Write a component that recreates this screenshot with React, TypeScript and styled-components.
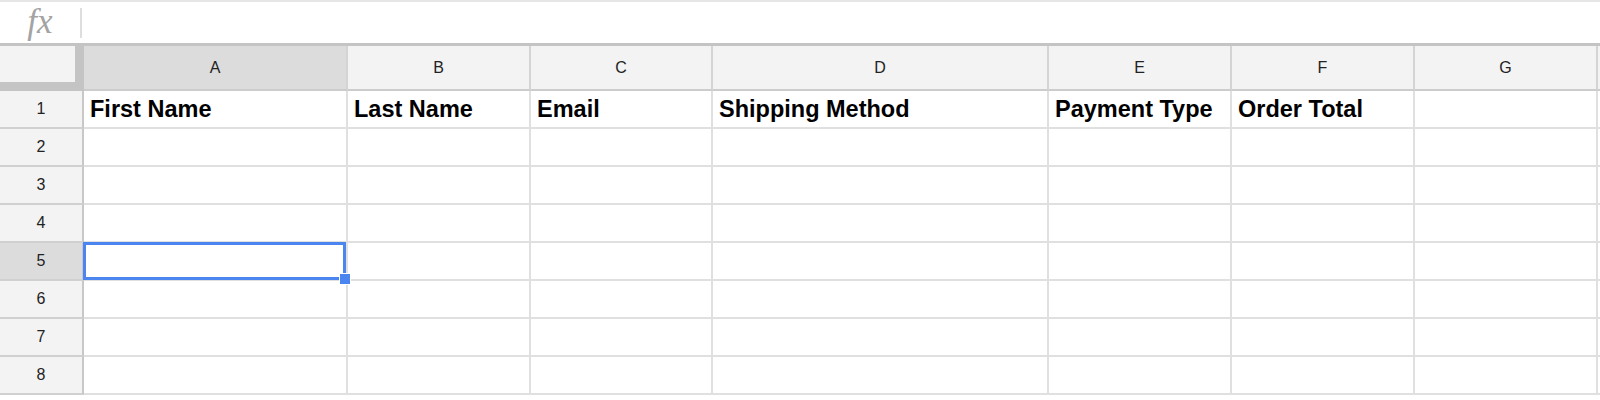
import { createGlobalStyle, styled } from 'styled-components';

const columns = [
  { key: 'A', width: 264 },
  { key: 'B', width: 183 },
  { key: 'C', width: 182 },
  { key: 'D', width: 336 },
  { key: 'E', width: 183 },
  { key: 'F', width: 183 },
  { key: 'G', width: 183 },
];

const headings = ['First Name', 'Last Name', 'Email', 'Shipping Method', 'Payment Type', 'Order Total', ''];

const rowCount = 8;
const activeCol = 0;
const activeRow = 5;

export default function App() {
  return (
    <>
      <GlobalStyle />
      <Page>
        <FormulaBar>
          <FxLabel>fx</FxLabel>
          <FormulaDivider />
          <FormulaInput />
        </FormulaBar>
        <Grid>
          <Corner />
          {columns.map((col, i) => (
            <ColumnHeader key={col.key} $active={i === activeCol}>
              {col.key}
            </ColumnHeader>
          ))}
          <ColumnHeader $active={false} />

          {Array.from({ length: rowCount }, (_, r) => {
            const row = r + 1;
            return [
              <RowHeader key={`h${row}`} $active={row === activeRow}>
                {row}
              </RowHeader>,
              ...columns.map((col, c) => (
                <Cell key={`${col.key}${row}`} $bold={row === 1}>
                  {row === 1 ? headings[c] : null}
                  {row === activeRow && c === activeCol && (
                    <Selection>
                      <FillHandle />
                    </Selection>
                  )}
                </Cell>
              )),
              <Cell key={`rest${row}`} $bold={false} />,
            ];
          })}
        </Grid>
      </Page>
    </>
  );
}

const GlobalStyle = createGlobalStyle`
  html, body {
    margin: 0;
    padding: 0;
    background: #fff;
    overflow: hidden;
  }
  body {
    font-family: "Liberation Sans", Arial, Helvetica, sans-serif;
  }
`;

const Page = styled.div`
  width: 1600px;
  height: 400px;
  overflow: hidden;
  background: #fff;
`;

const FormulaBar = styled.div`
  height: 43px;
  box-sizing: border-box;
  border-top: 2px solid #e6e6e6;
  display: flex;
  align-items: center;
`;

const FxLabel = styled.div`
  width: 80px;
  text-align: center;
  font-family: "Liberation Serif", "Times New Roman", serif;
  font-style: italic;
  font-size: 35px;
  color: #a3a3a3;
  line-height: 38px;
  padding-bottom: 2px;
`;

const FormulaDivider = styled.div`
  width: 2px;
  height: 30px;
  background: #dedede;
`;

const FormulaInput = styled.div`
  flex: 1;
`;

const Grid = styled.div`
  display: grid;
  grid-template-columns: 84px ${columns.map((c) => `${c.width}px`).join(' ')} 1fr;
  grid-template-rows: 45px repeat(${rowCount}, 38px);
  border-top: 3px solid #c4c4c4;
`;

const Corner = styled.div`
  box-sizing: border-box;
  background: #f3f3f3;
  border-right: 9px solid #c4c4c4;
  border-bottom: 9px solid #c4c4c4;
`;

const ColumnHeader = styled.div<{ $active: boolean }>`
  box-sizing: border-box;
  display: flex;
  align-items: center;
  justify-content: center;
  background: ${(p) => (p.$active ? '#dcdcdc' : '#f3f3f3')};
  border-right: 2px solid #d4d4d4;
  border-bottom: 2px solid #cccccc;
  font-size: 16px;
  color: #222;
  padding-top: 1px;
`;

const RowHeader = styled.div<{ $active: boolean }>`
  box-sizing: border-box;
  display: flex;
  align-items: center;
  justify-content: center;
  background: ${(p) => (p.$active ? '#dcdcdc' : '#f3f3f3')};
  border-right: 2px solid #c8c8c8;
  border-bottom: 2px solid #d0d0d0;
  font-size: 16px;
  color: #222;
`;

const Cell = styled.div<{ $bold: boolean }>`
  position: relative;
  box-sizing: border-box;
  display: flex;
  align-items: center;
  padding: 0 6px;
  border-right: 2px solid #e0e0e0;
  border-bottom: 2px solid #e0e0e0;
  font-size: 23.5px;
  font-weight: ${(p) => (p.$bold ? 700 : 400)};
  color: #000;
  white-space: nowrap;
`;

// active cell outline, drawn above the neighbouring cells
const Selection = styled.div`
  position: absolute;
  z-index: 2;
  top: -1px;
  left: -1px;
  right: 0;
  bottom: -1px;
  border: 3px solid #4a85f0;
  pointer-events: none;
`;

const FillHandle = styled.div`
  position: absolute;
  right: -8px;
  bottom: -8px;
  width: 10px;
  height: 10px;
  background: #4a85f0;
  border: 1px solid #fff;
`;
